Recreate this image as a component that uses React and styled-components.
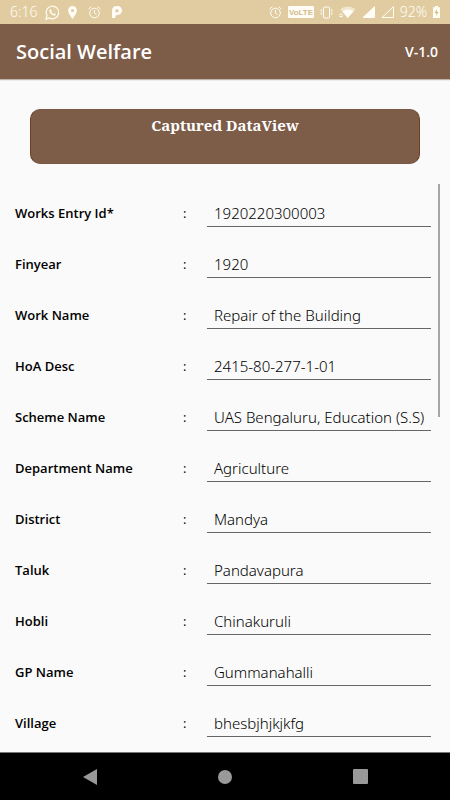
import React from "react";
import styled, { createGlobalStyle } from "styled-components";

const brown = "#7d5c48";

const GlobalStyle = createGlobalStyle`
  * {
    box-sizing: border-box;
  }

  body {
    margin: 0;
    background: #fafafa;
    color: #000;
    font-family: "Open Sans", "Noto Sans", sans-serif;
  }
`;

const Screen = styled.div`
  height: 100vh;
  display: flex;
  flex-direction: column;
`;

const StatusBar = styled.div`
  flex: none;
  height: 24px;
  padding: 0 10px;
  display: flex;
  align-items: center;
  justify-content: space-between;
  background: #e1cca1;
  color: #fffdf6;
  font-size: 14px;
  line-height: 24px;
`;

const StatusGroup = styled.div`
  display: flex;
  align-items: center;
  gap: ${props => props.$gap};
`;

const Icon = styled.svg`
  display: block;
  flex: none;
  overflow: visible;
`;

const AppBar = styled.header`
  flex: none;
  height: 55px;
  padding: 0 12px 0 16px;
  display: flex;
  align-items: center;
  justify-content: space-between;
  background: ${brown};
  color: #fff;
  box-shadow: 0 1px 1px rgba(80, 50, 30, 0.35);
`;

const Title = styled.h1`
  margin: 0;
  font-size: 20px;
  font-weight: 600;
`;

const Version = styled.span`
  font-size: 14px;
  font-weight: 600;
`;

const Content = styled.main`
  flex: 1;
  min-height: 0;
  display: flex;
  flex-direction: column;
`;

const Banner = styled.h2`
  flex: none;
  height: 55px;
  margin: 30px 30px 20px;
  padding-top: 5px;
  border: 1px solid;
  border-color: #795743 #6b4122;
  border-radius: 10px;
  background: ${brown};
  color: #fff;
  font-family: "Noto Serif", "Droid Serif", "DejaVu Serif", serif;
  font-size: 15px;
  font-weight: 700;
  line-height: 20px;
  text-align: center;
`;

const ListArea = styled.div`
  flex: 1;
  min-height: 0;
  position: relative;
  overflow: hidden;
`;

const Form = styled.form`
  padding: 0 19px 0 15px;
`;

const Row = styled.div`
  height: 51px;
  display: flex;
  align-items: flex-end;
  padding-bottom: 8px;
`;

const Label = styled.label`
  width: 168px;
  font-size: 13px;
  font-weight: 600;
  line-height: 27px;
`;

const Colon = styled.span`
  width: 24px;
  font-size: 13px;
  line-height: 27px;
`;

const Field = styled.input`
  flex: 1;
  min-width: 0;
  height: 25px;
  padding: 0 0 2px 7px;
  border: 0;
  border-bottom: 1px solid #666;
  border-radius: 0;
  outline: none;
  background: transparent;
  color: #000;
  font-family: "Noto Sans", "Open Sans", sans-serif;
  font-size: 15px;
  font-weight: 300;
`;

// overlay thumb, sits over the list
const ScrollThumb = styled.div`
  position: absolute;
  top: 0;
  right: 10px;
  width: 2px;
  height: 41%;
  background: #a6a6a6;
`;

const NavBar = styled.nav`
  flex: none;
  height: 48px;
  display: flex;
  justify-content: center;
  gap: 87px;
  border-top: 1px solid #777;
  background: #000;
`;

const NavButton = styled.button`
  width: 48px;
  padding: 0;
  border: 0;
  background: none;
  display: flex;
  align-items: center;
  justify-content: center;
`;

const StatusText = styled.span`
  font-family: "Noto Sans", "Open Sans", sans-serif;
  font-weight: 300;
`;

const fields = [
  { id: "entryId", label: "Works Entry Id*", value: "1920220300003" },
  { id: "finyear", label: "Finyear", value: "1920" },
  { id: "workName", label: "Work Name", value: "Repair of the Building" },
  { id: "hoaDesc", label: "HoA Desc", value: "2415-80-277-1-01" },
  { id: "scheme", label: "Scheme Name", value: "UAS Bengaluru, Education (S.S)" },
  { id: "department", label: "Department Name", value: "Agriculture" },
  { id: "district", label: "District", value: "Mandya" },
  { id: "taluk", label: "Taluk", value: "Pandavapura" },
  { id: "hobli", label: "Hobli", value: "Chinakuruli" },
  { id: "gpName", label: "GP Name", value: "Gummanahalli" },
  { id: "village", label: "Village", value: "bhesbjhjkjkfg" }
];

const WhatsAppIcon = () => (
  <Icon width="15" height="15" viewBox="0 0 15 15" fill="none" stroke="currentColor">
    <path d="M1 14l1-3.4A6.3 6.3 0 1 1 4.500 13z" strokeWidth="1.200" />
    <path
      d="M5.300 3.900l-.9 1c-.4 2.600 3.200 6 5.600 5.700l1.100-1.200-1.800-1.200-.9.8c-1-.4-1.900-1.300-2.200-2.200l.7-.9z"
      fill="currentColor"
      stroke="none"
    />
  </Icon>
);

const PinIcon = () => (
  <Icon width="9" height="13" viewBox="0 0 9 13" fill="currentColor">
    <path
      fillRule="evenodd"
      d="M4.500 0A4.400 4.400 0 0 0 .1 4.400C.1 7.500 4.500 12.800 4.500 12.800S8.900 7.500 8.900 4.400A4.400 4.400 0 0 0 4.500 0zM4.500 2.900a1.600 1.600 0 1 1 0 3.200 1.600 1.600 0 0 1 0-3.200z"
    />
  </Icon>
);

const AlarmIcon = () => (
  <Icon width="13" height="13" viewBox="0 0 13 13" fill="none" stroke="currentColor">
    <circle cx="6.500" cy="7" r="4.800" />
    <path d="M6.500 4v3.200l2 1.200M.6 3L3.400.7M12.400 3L9.600.7" />
  </Icon>
);

const ParkingIcon = () => (
  <Icon width="10" height="12" viewBox="0 0 10 12" fill="currentColor">
    <path
      fillRule="evenodd"
      d="M0 4.600A4.500 4.500 0 0 1 4.500 0h1a4.500 4.500 0 0 1 0 9H4.200L3 12H0zM4.700 3.200a1.300 1.300 0 0 0-1.300 1.400v1.700h1.800a1.500 1.500 0 0 0 0-3.100z"
    />
  </Icon>
);

const VolteIcon = () => (
  <Icon width="26" height="12" viewBox="0 0 26 12">
    <rect width="26" height="12" rx="1" fill="currentColor" />
    <text
      x="13"
      y="9"
      textAnchor="middle"
      fontFamily="Liberation Sans, sans-serif"
      fontSize="8"
      fontWeight="700"
      fill="#d3bc8e"
    >
      VoLTE
    </text>
  </Icon>
);

const VibrateIcon = () => (
  <Icon width="13" height="13" viewBox="0 0 13 13" fill="none" stroke="currentColor">
    <rect x="3.500" y="1" width="6" height="11" rx="1" />
    <path d="M1.800 3l-1 1.200 1 1.200-1 1.200 1 1.200-1 1.200M11.200 3l1 1.200-1 1.200 1 1.200-1 1.200 1 1.200" />
  </Icon>
);

const WifiIcon = () => (
  <Icon width="17" height="12" viewBox="0 0 17 12">
    <path d="M1.300 3.300a11.200 11.200 0 0 1 15 0L8.800 12z" fill="currentColor" opacity="0.55" />
    <path d="M3.300 5.500a8.200 8.200 0 0 1 11 0L8.800 12z" fill="currentColor" />
    <path d="M.5 9.500l1.500-2 1.500 2M.5 10.500h3" fill="none" stroke="currentColor" />
  </Icon>
);

const SignalIcon = ({ empty }) => (
  <Icon width="13" height="12" viewBox="0 0 13 12">
    <path
      d="M1 11.500L12.500.7v10.800z"
      fill={empty ? "none" : "currentColor"}
      stroke="currentColor"
    />
  </Icon>
);

const BatteryIcon = () => (
  <Icon width="7" height="12" viewBox="0 0 7 12">
    <path d="M2 0h3v1.200h2V12H0V1.200h2z" fill="currentColor" />
    <path d="M4 3L1.500 7h1.800L3 10l2.500-4H3.700z" fill="#d3b878" />
  </Icon>
);

const App = () => (
  <Screen>
    <GlobalStyle />
    <StatusBar>
      <StatusGroup $gap="8px">
        <StatusText>6:16</StatusText>
        <WhatsAppIcon />
        <StatusGroup $gap="11px">
          <PinIcon />
          <AlarmIcon />
          <ParkingIcon />
        </StatusGroup>
      </StatusGroup>
      <StatusGroup $gap="6px">
        <AlarmIcon />
        <VolteIcon />
        <VibrateIcon />
        <WifiIcon />
        <SignalIcon />
        <SignalIcon empty />
        <StatusText>92%</StatusText>
        <BatteryIcon />
      </StatusGroup>
    </StatusBar>
    <AppBar>
      <Title>Social Welfare</Title>
      <Version>V-1.0</Version>
    </AppBar>
    <Content>
      <Banner>Captured DataView</Banner>
      <ListArea>
        <Form>
          {fields.map(field => (
            <Row key={field.id}>
              <Label htmlFor={field.id}>{field.label}</Label>
              <Colon>:</Colon>
              <Field id={field.id} type="text" defaultValue={field.value} />
            </Row>
          ))}
        </Form>
        <ScrollThumb />
      </ListArea>
    </Content>
    <NavBar>
      <NavButton type="button" aria-label="Back">
        <Icon width="14" height="16" viewBox="0 0 14 16" fill="#999">
          <path d="M0 8L14 0v16z" />
        </Icon>
      </NavButton>
      <NavButton type="button" aria-label="Home">
        <Icon width="14" height="14" viewBox="0 0 14 14" fill="#999">
          <circle cx="7" cy="7" r="7" />
        </Icon>
      </NavButton>
      <NavButton type="button" aria-label="Recent apps">
        <Icon width="15" height="15" viewBox="0 0 15 15" fill="#999">
          <rect width="15" height="15" rx="1" />
        </Icon>
      </NavButton>
    </NavBar>
  </Screen>
);

export default App;
